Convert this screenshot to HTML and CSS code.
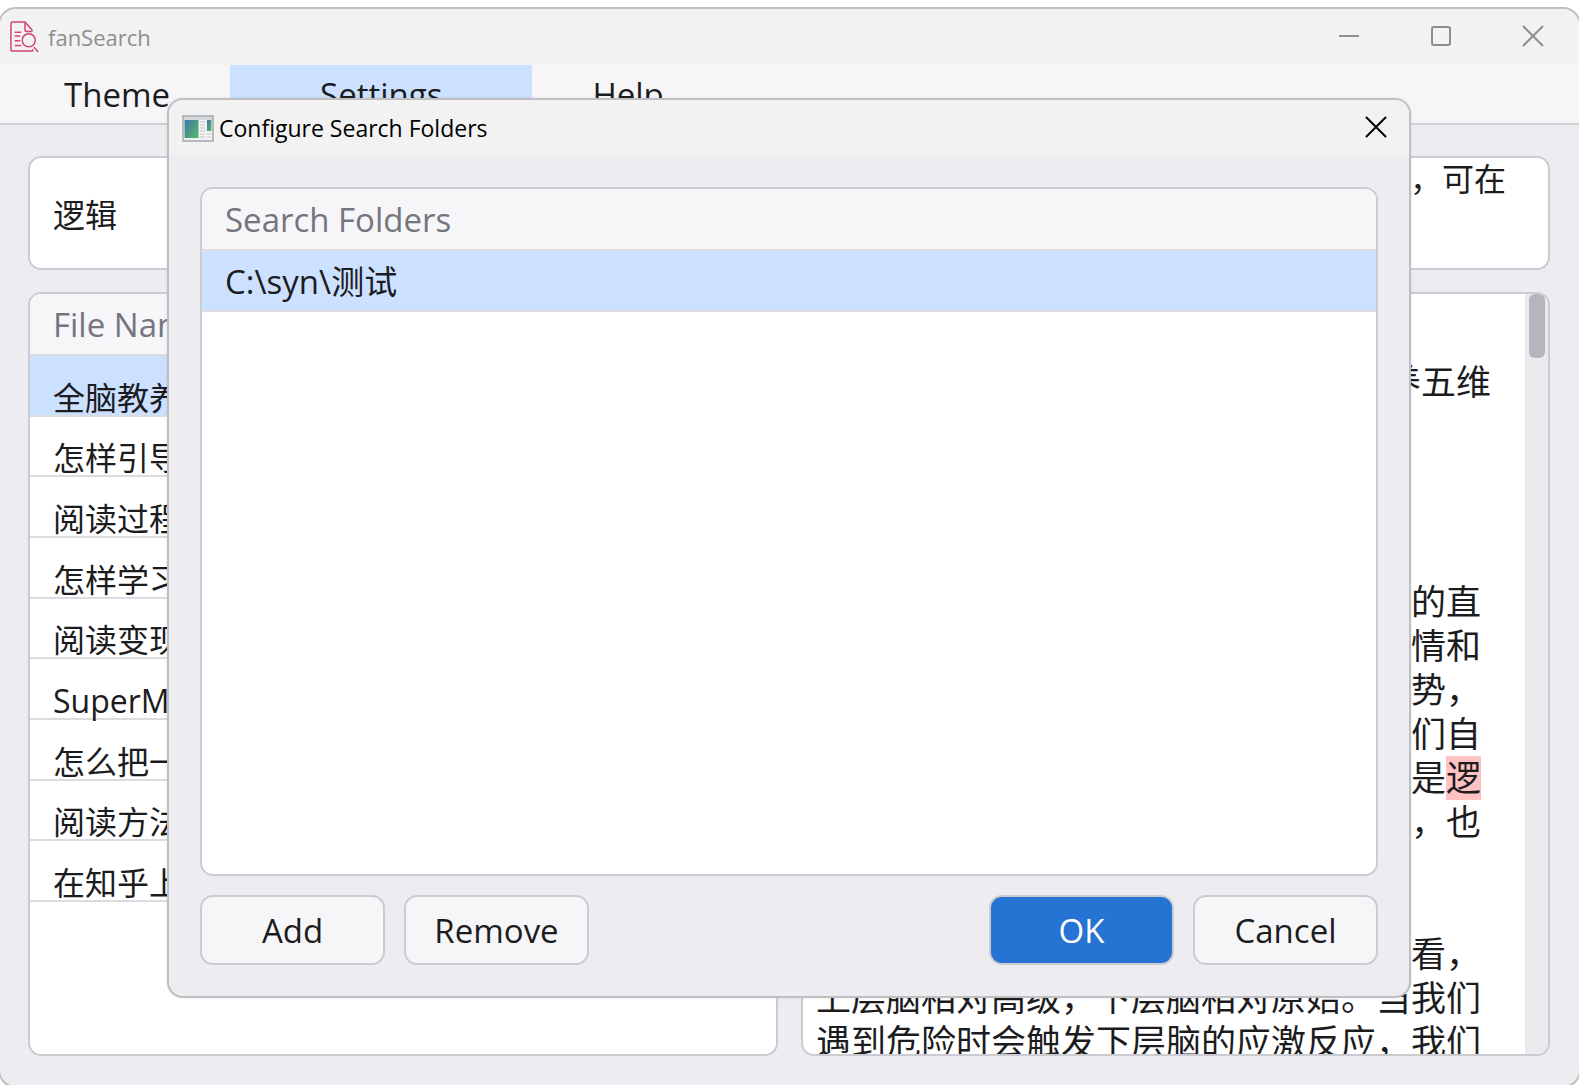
FILE: index.html
```
<!DOCTYPE html>
<html lang="zh-CN">
<head>
    <meta charset="UTF-8">
    <meta name="viewport" content="width=device-width, initial-scale=1.0">
    <title>fanSearch</title>
    <link rel="stylesheet" href="styles.css">
</head>
<body>
    <div class="window">
        <header class="titlebar">
            <svg class="app-icon" viewBox="0 0 32 34" fill="none" stroke="#d4427a" stroke-width="1.6">
                <path d="M24 30v2H3a2 2 0 0 1-2-2V3a2 2 0 0 1 2-2h13l8 9"/>
                <path d="M16 1v8a2 2 0 0 0 2 2h6"/>
                <path d="M5 12h7M5 16h6M5 21h6M5 26h7"/>
                <circle cx="20" cy="20.500" r="7"/>
                <path d="M25.500 28l4.500 5"/>
            </svg>
            <span class="titlebar-text">fanSearch</span>
            <div class="window-controls">
                <button type="button" class="control" aria-label="Minimize">
                    <svg viewBox="0 0 22 22"><path d="M1 11h20"/></svg>
                </button>
                <button type="button" class="control" aria-label="Maximize">
                    <svg viewBox="0 0 22 22"><rect x="2" y="2" width="18" height="18" rx="2"/></svg>
                </button>
                <button type="button" class="control" aria-label="Close">
                    <svg viewBox="0 0 22 22"><path d="M1 1l20 20M21 1L1 21"/></svg>
                </button>
            </div>
        </header>

        <nav class="menubar">
            <button type="button" class="menu-item">Theme</button>
            <button type="button" class="menu-item active">Settings</button>
            <button type="button" class="menu-item">Help</button>
        </nav>

        <main class="content">
            <input type="text" class="panel search-input" value="逻辑" aria-label="Search">
            <div class="panel hint">
                <p>，可在</p>
            </div>

            <div class="panel">
                <table class="list files">
                    <thead>
                        <tr><th>File Name</th></tr>
                    </thead>
                    <tbody>
                        <tr class="selected"><td>全脑教养</td></tr>
                        <tr><td>怎样引导</td></tr>
                        <tr><td>阅读过程</td></tr>
                        <tr><td>怎样学习</td></tr>
                        <tr><td>阅读变现</td></tr>
                        <tr><td>SuperM</td></tr>
                        <tr><td>怎么把一</td></tr>
                        <tr><td>阅读方法</td></tr>
                        <tr><td>在知乎上</td></tr>
                    </tbody>
                </table>
            </div>

            <div class="panel preview">
                <div class="preview-text">
                    <p><br></p>
                    <p class="preview-title">养五维</p>
                    <p><br><br><br><br></p>
                    <p>的直<br>情和<br>势，<br>我们自<br>是<mark>逻</mark><br>，也</p>
                    <p><br><br></p>
                    <p>看，<br>上层脑相对高级，下层脑相对原始。当我们<br>遇到危险时会触发下层脑的应激反应，我们</p>
                </div>
                <div class="scroll-track">
                    <div class="scroll-thumb"></div>
                </div>
            </div>
        </main>

        <div class="dialog" role="dialog" aria-labelledby="dialogTitle">
            <header class="dialog-titlebar">
                <svg class="dialog-icon" viewBox="0 0 32 27">
                    <defs>
                        <linearGradient id="pane" x1="0" y1="0" x2="1" y2="1">
                            <stop offset="0" stop-color="#3f78a8"/>
                            <stop offset="1" stop-color="#58b868"/>
                        </linearGradient>
                    </defs>
                    <rect x="1" y="1" width="30" height="25" fill="#f1f2f2" stroke="#a3a8ac" stroke-width="1.5"/>
                    <rect x="2" y="2" width="28" height="3" fill="#d3d8dc"/>
                    <rect x="2.5" y="5" width="14" height="18" fill="url(#pane)"/>
                    <rect x="25" y="5" width="4.500" height="11" fill="url(#pane)"/>
                    <path d="M18 7h5M18 10h5M18 13h5M18 16h5M18 19h5M18 22h5M25 19h4M25 22h4" stroke="#c6c9cb" stroke-width="1"/>
                </svg>
                <h2 id="dialogTitle">Configure Search Folders</h2>
                <button type="button" class="control dialog-close" aria-label="Close">
                    <svg viewBox="0 0 22 22"><path d="M1 1l20 20M21 1L1 21"/></svg>
                </button>
            </header>
            <div class="dialog-body">
                <div class="panel folders">
                    <table class="list">
                        <thead>
                            <tr><th>Search Folders</th></tr>
                        </thead>
                        <tbody>
                            <tr class="selected"><td>C:\syn\测试</td></tr>
                        </tbody>
                    </table>
                </div>
                <div class="actions">
                    <button type="button" class="btn">Add</button>
                    <button type="button" class="btn">Remove</button>
                    <button type="button" class="btn primary">OK</button>
                    <button type="button" class="btn">Cancel</button>
                </div>
            </div>
        </div>
    </div>
</body>
</html>
```

FILE: styles.css
```
* {
    margin: 0;
    padding: 0;
    box-sizing: border-box;
}

body {
    height: 100vh;
    padding-top: 7px;
    overflow: hidden;
    background: #fff;
    color: #1c1c1e;
    font-family: "Open Sans", "Noto Sans CJK SC", sans-serif;
    font-size: 33px;
}

button,
input {
    font: inherit;
    color: inherit;
    border: none;
    background: none;
}

.window {
    height: calc(100vh - 4px);
    margin: 0 -2px;
    display: flex;
    flex-direction: column;
    position: relative;
    border: 2px solid #bfbfbf;
    border-radius: 18px;
    background: #edecf1;
    overflow: hidden;
}

/* title bar */
.titlebar {
    height: 56px;
    flex-shrink: 0;
    display: flex;
    align-items: center;
    padding-left: 10px;
    background: #f2f2f2;
    color: #8e8e8e;
}

.app-icon {
    width: 30px;
    height: 34px;
}

.titlebar-text {
    flex: 1;
    margin-left: 8px;
    font-size: 22px;
}

.window-controls {
    display: flex;
}

.control {
    width: 92px;
    height: 56px;
    display: flex;
    align-items: center;
    justify-content: center;
    padding-bottom: 2px;
}

.control svg {
    width: 22px;
    height: 22px;
    fill: none;
    stroke: currentColor;
    stroke-width: 2;
}

/* menu */
.menubar {
    height: 60px;
    flex-shrink: 0;
    display: flex;
    padding-left: 4px;
    background: #f6f6f9;
    border-bottom: 2px solid #cfcfd4;
}

.menu-item {
    padding: 0 60px;
}

.menu-item.active {
    padding: 0 90px;
    background: #cce0ff;
}

/* main area */
.content {
    flex: 1;
    min-height: 0;
    display: grid;
    grid-template-columns: 1fr 1fr;
    grid-template-rows: 114px 1fr;
    gap: 22px 23px;
    padding: 31px 29px 30px 28px;
}

.panel {
    min-width: 0;
    min-height: 0;
    border: 2px solid #cbcbd3;
    border-radius: 13px;
    background: #fff;
    overflow: hidden;
}

.search-input {
    padding: 0 23px;
    font-size: 32px;
}

.hint {
    padding-right: 42px;
    font-size: 32px;
    line-height: 42px;
    text-align: right;
}

.list {
    width: 100%;
    border-collapse: collapse;
}

.list th,
.list td {
    height: 61px;
    padding: 2px 23px 0;
    border-bottom: 2px solid #dcdce0;
    font-weight: normal;
    line-height: 32px;
    text-align: left;
    white-space: nowrap;
}

.list th {
    background: #f6f6f9;
    color: #75757e;
}

.list .selected {
    background: #cce0ff;
}

.files {
    height: 608px;
}

.files td {
    height: 60px;
    padding-top: 25px;
    font-size: 32px;
}

.preview {
    display: flex;
}

.preview-text {
    flex: 1;
    min-width: 0;
    padding: 22px 44px 0 12px;
    font-size: 35px;
    line-height: 44px;
    text-align: right;
    white-space: nowrap;
}

.preview-title {
    margin-right: -10px;
}

.preview mark {
    display: inline-block;
    background: #ffc2c2;
    color: inherit;
}

.scroll-track {
    flex-shrink: 0;
    width: 23px;
    padding: 0 3px 0 4px;
    background: #ebebed;
}

.scroll-thumb {
    height: 64px;
    border-radius: 6px;
    background: #b4b5bd;
}

/* dialog */
.dialog {
    position: absolute;
    top: 89px;
    right: 168px;
    bottom: 88px;
    left: 167px;
    display: flex;
    flex-direction: column;
    border: 2px solid #bfbfc2;
    border-radius: 16px;
    background: #edecf1;
    box-shadow: 0 0 3px rgba(0, 0, 0, 0.1);
    overflow: hidden;
}

.dialog-titlebar {
    height: 56px;
    flex-shrink: 0;
    display: flex;
    align-items: center;
    padding-left: 13px;
    background: #f2f2f2;
    color: #000;
}

.dialog-icon {
    width: 32px;
    height: 27px;
}

.dialog-titlebar h2 {
    flex: 1;
    margin-left: 5px;
    font-size: 23px;
    font-weight: normal;
}

.dialog-close {
    width: 66px;
}

.dialog-body {
    flex: 1;
    min-height: 0;
    display: flex;
    flex-direction: column;
    gap: 19px;
    padding: 31px;
}

.folders {
    flex: 1;
}

.actions {
    display: flex;
    gap: 19px;
}

.btn {
    width: 185px;
    height: 70px;
    border: 2px solid #cbcbd0;
    border-radius: 13px;
    background: #f6f6f9;
}

.btn.primary {
    margin-left: auto;
    background: #2573d3;
    color: #fff;
}
```
